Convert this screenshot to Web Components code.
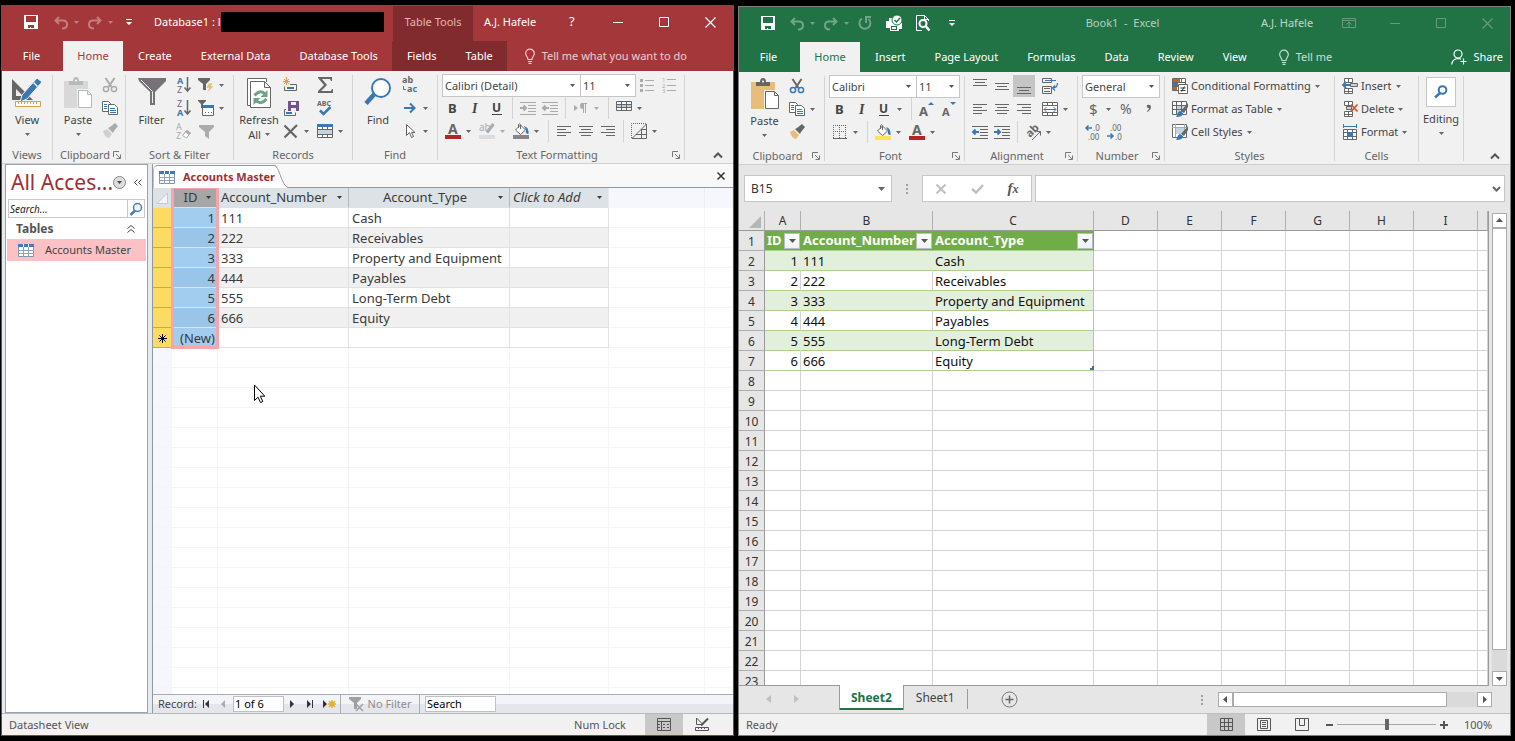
<!DOCTYPE html>
<html lang="en">
<head>
<meta charset="utf-8">
<title>Access and Excel side by side</title>
<style>
  html, body { height: 100%; }
  body {
    margin: 0;
    background: #000;
    font-family: "Noto Sans", "Open Sans", sans-serif;
    font-size: 11px;
    line-height: 16px;
    color: #444;
    overflow: hidden;
  }
  main {
    box-sizing: border-box;
    height: 100%;
    padding: 5px 4px 5px 1px;
    display: grid;
    grid-template-columns: 733fr 773fr;
    gap: 4px;
  }
  office-window.excel { margin-top: 1px; }
  .stack { display: flex; flex-direction: column; }
  .row { display: flex; height: 23px; }
  .gap { width: 4px; }
</style>
</head>
<body>
<main>
  <office-window class="access" style="--brand:#a4373a; --brand-dark:#822b2e; --frame:#a4373a; --back:#f0f0f0; --far:8px">
    <title-bar slot="title" user="A.J. Hafele" help>
      <tool-button slot="quick" icon="save" label="Save"></tool-button>
      <tool-button slot="quick" icon="undo" label="Undo" caret faded class="far"></tool-button>
      <tool-button slot="quick" icon="redo" label="Redo" caret faded></tool-button>
      <tool-button slot="quick" icon="custom" label="Customize Quick Access Toolbar"></tool-button>
      <document-name slot="name">Database1 : l</document-name>
      <span slot="context">Table Tools</span>
    </title-bar>
    <tab-strip slot="tabs" tabs="File,Home,Create,External Data,Database Tools" context="Fields,Table" tell="Tell me what you want to do"></tab-strip>
    <ribbon-bar slot="ribbon">
      <ribbon-group label="Views">
        <big-button icon="view" label="View" caret></big-button>
      </ribbon-group>
      <ribbon-group label="Clipboard" launcher>
        <big-button icon="paste" label="Paste" caret disabled></big-button>
        <div class="stack">
          <tool-button icon="cut" label="Cut" disabled></tool-button>
          <tool-button icon="copy" label="Copy"></tool-button>
          <tool-button icon="painter" label="Format Painter" disabled></tool-button>
        </div>
      </ribbon-group>
      <ribbon-group label="Sort &amp; Filter">
        <big-button icon="filter" label="Filter" style="--big:43px"></big-button>
        <div class="stack">
          <tool-button icon="sortAsc" label="Ascending"></tool-button>
          <tool-button icon="sortDesc" label="Descending"></tool-button>
          <tool-button icon="sortClear" label="Remove Sort" disabled></tool-button>
        </div>
        <div class="stack">
          <tool-button icon="selection" label="Selection" caret></tool-button>
          <tool-button icon="advanced" label="Advanced" caret></tool-button>
          <tool-button icon="funnel" label="Toggle Filter" disabled></tool-button>
        </div>
      </ribbon-group>
      <ribbon-group label="Records">
        <big-button icon="refresh" label="Refresh" second="All" caret></big-button>
        <div class="stack">
          <tool-button icon="newRecord" label="New"></tool-button>
          <tool-button icon="saveRecord" label="Save Record"></tool-button>
          <tool-button icon="deleteX" label="Delete" caret></tool-button>
        </div>
        <div class="stack">
          <tool-button icon="sigma" label="Totals"></tool-button>
          <tool-button icon="spelling" label="Spelling"></tool-button>
          <tool-button icon="moreRows" label="More" caret></tool-button>
        </div>
      </ribbon-group>
      <ribbon-group label="Find">
        <big-button icon="find" label="Find"></big-button>
        <div class="stack">
          <tool-button icon="replace" label="Replace"></tool-button>
          <tool-button icon="goto" label="Go To" caret></tool-button>
          <tool-button icon="select" label="Select" caret></tool-button>
        </div>
      </ribbon-group>
      <ribbon-group label="Text Formatting" launcher>
        <div class="stack">
          <div class="row">
            <combo-box value="Calibri (Detail)" label="Font" style="--w:139px"></combo-box>
            <combo-box value="11" label="Font Size" style="--w:55px"></combo-box>
            <tool-button icon="bullets" label="Bullets" disabled></tool-button>
            <tool-button icon="numbers" label="Numbering" disabled></tool-button>
          </div>
          <div class="row">
            <tool-button icon="bold" label="Bold"></tool-button>
            <tool-button icon="italic" label="Italic"></tool-button>
            <tool-button icon="underline" label="Underline"></tool-button>
            <tool-rule></tool-rule>
            <tool-button icon="indent" label="Increase List Level" disabled></tool-button>
            <tool-button icon="outdent" label="Decrease List Level" disabled></tool-button>
            <tool-rule></tool-rule>
            <tool-button icon="pilcrow" label="Left-to-Right" caret disabled></tool-button>
            <tool-rule></tool-rule>
            <tool-button icon="gridlines" label="Gridlines" caret></tool-button>
          </div>
          <div class="row">
            <tool-button icon="fontColor" label="Font Color" caret></tool-button>
            <tool-button icon="highlight" label="Text Highlight Color" caret disabled></tool-button>
            <tool-button icon="fill" label="Background Color" caret style="--fill:#8a838b"></tool-button>
            <tool-rule></tool-rule>
            <tool-button icon="alignLeft" label="Align Left"></tool-button>
            <tool-button icon="alignCenter" label="Center"></tool-button>
            <tool-button icon="alignRight" label="Align Right"></tool-button>
            <tool-rule></tool-rule>
            <tool-button icon="altRow" label="Alternate Row Color" caret></tool-button>
          </div>
        </div>
      </ribbon-group>
    </ribbon-bar>
    <access-body slot="body"></access-body>
    <status-bar slot="status" text="Datasheet View" lock="Num Lock" views="sheetView,designView"></status-bar>
  </office-window>

  <office-window class="excel" style="--brand:#217346; --brand-dark:#185c37; --frame:#7f7f7f; --back:#e6e6e6; --far:7px; --big:43px">
    <title-bar slot="title" user="A.J. Hafele" centered faded>
      <tool-button slot="quick" icon="save" label="Save"></tool-button>
      <tool-button slot="quick" icon="undo" label="Undo" caret faded class="far"></tool-button>
      <tool-button slot="quick" icon="redo" label="Redo" caret faded></tool-button>
      <tool-button slot="quick" icon="repeat" label="Repeat" faded></tool-button>
      <tool-button slot="quick" icon="print" label="Quick Print" class="far"></tool-button>
      <tool-button slot="quick" icon="preview" label="Print Preview" class="far"></tool-button>
      <tool-button slot="quick" icon="custom" label="Customize Quick Access Toolbar" class="far"></tool-button>
      <span slot="name">Book1&nbsp; -&nbsp; Excel</span>
    </title-bar>
    <tab-strip slot="tabs" tabs="File,Home,Insert,Page Layout,Formulas,Data,Review,View" tell="Tell me" share></tab-strip>
    <ribbon-bar slot="ribbon">
      <ribbon-group label="Clipboard" launcher>
        <big-button icon="paste" label="Paste" caret></big-button>
        <div class="stack">
          <tool-button icon="cut" label="Cut"></tool-button>
          <tool-button icon="copy" label="Copy" caret></tool-button>
          <tool-button icon="painter" label="Format Painter"></tool-button>
        </div>
      </ribbon-group>
      <ribbon-group label="Font" launcher>
        <div class="stack">
          <div class="row">
            <combo-box value="Calibri" label="Font" style="--w:88px"></combo-box>
            <combo-box value="11" label="Font Size" style="--w:43px"></combo-box>
          </div>
          <div class="row">
            <tool-button icon="bold" label="Bold"></tool-button>
            <tool-button icon="italic" label="Italic"></tool-button>
            <tool-button icon="underline" label="Underline" caret></tool-button>
            <tool-rule></tool-rule>
            <tool-button icon="grow" label="Increase Font Size"></tool-button>
            <tool-button icon="shrink" label="Decrease Font Size"></tool-button>
          </div>
          <div class="row">
            <tool-button icon="borders" label="Borders" caret></tool-button>
            <tool-rule></tool-rule>
            <tool-button icon="fill" label="Fill Color" caret style="--fill:#ffe35c"></tool-button>
            <tool-button icon="fontColor" label="Font Color" caret></tool-button>
          </div>
        </div>
      </ribbon-group>
      <ribbon-group label="Alignment" launcher>
        <div class="stack">
          <div class="row">
            <tool-button icon="top" label="Top Align"></tool-button>
            <tool-button icon="middle" label="Middle Align"></tool-button>
            <tool-button icon="bottom" label="Bottom Align" pressed></tool-button>
            <span class="gap"></span>
            <tool-button icon="wrap" label="Wrap Text"></tool-button>
          </div>
          <div class="row">
            <tool-button icon="alignLeft" label="Align Left"></tool-button>
            <tool-button icon="alignCenter" label="Center"></tool-button>
            <tool-button icon="alignRight" label="Align Right"></tool-button>
            <span class="gap"></span>
            <tool-button icon="merge" label="Merge and Center" caret></tool-button>
          </div>
          <div class="row">
            <tool-button icon="outdent" label="Decrease Indent"></tool-button>
            <tool-button icon="indent" label="Increase Indent"></tool-button>
            <tool-rule></tool-rule>
            <tool-button icon="orient" label="Orientation" caret></tool-button>
          </div>
        </div>
      </ribbon-group>
      <ribbon-group label="Number" launcher>
        <div class="stack">
          <div class="row"><combo-box value="General" label="Number Format" style="--w:78px"></combo-box></div>
          <div class="row">
            <tool-button icon="dollar" label="Accounting Number Format" caret></tool-button>
            <tool-button icon="percent" label="Percent Style"></tool-button>
            <tool-button icon="comma" label="Comma Style"></tool-button>
          </div>
          <div class="row">
            <tool-button icon="moreDec" label="Increase Decimal"></tool-button>
            <tool-button icon="lessDec" label="Decrease Decimal"></tool-button>
          </div>
        </div>
      </ribbon-group>
      <ribbon-group label="Styles" style="--group:170px">
        <div class="stack">
          <tool-button icon="condFormat" text="Conditional Formatting" caret></tool-button>
          <tool-button icon="formatTable" text="Format as Table" caret></tool-button>
          <tool-button icon="cellStyles" text="Cell Styles" caret></tool-button>
        </div>
      </ribbon-group>
      <ribbon-group label="Cells" style="--group:84px">
        <div class="stack">
          <tool-button icon="insertCells" text="Insert" caret></tool-button>
          <tool-button icon="deleteCells" text="Delete" caret></tool-button>
          <tool-button icon="formatCells" text="Format" caret></tool-button>
        </div>
      </ribbon-group>
      <ribbon-group>
        <big-button icon="editing" label="Editing" caret boxed></big-button>
      </ribbon-group>
    </ribbon-bar>
    <excel-body slot="body"></excel-body>
    <status-bar slot="status" text="Ready" views="normalView,pageView,breakView" zoom="100%"></status-bar>
  </office-window>
</main>

<script>
const INK = 'var(--ink, #666)';
const BLUE = 'var(--blue, #3a78b5)';
const TAN = 'var(--tan, #e8bd7c)';

const lines = (list, color = INK) =>
  `<path fill="${color}" d="${list.map(([x, y, w]) => `M${x} ${y}h${w}v1h${-w}z`).join('')}"/>`;

const letter = (x, y, size, text, extra = '') =>
  `<text x="${x}" y="${y}" font-size="${size}" font-family="Noto Sans" fill="${INK}" ${extra}>${text}</text>`;

const brush = `<path fill="${INK}" d="M16 2v4l-4 6-3-2z"/><path fill="${BLUE}" d="M8 10l3 2c0 3-3 4-7 4 2-2 1-5 4-6z"/>`;
const bucket = `<path fill="#fff" stroke="${INK}" d="M2.5 7l5-5 5 5-5 4.500z"/><path fill="none" stroke="${INK}" d="M5.500 5V1.500q1.500-1.500 2 0V6"/><path fill="${BLUE}" d="M11 3q5 1 4.500 8Q12 11 13 7z"/><path fill="var(--fill)" d="M0 12h16v4H0z"/>`;
const tableIcon = '<path fill="#fff" stroke="#7d95ad" d="M.5 1.500h15v12H.5z"/><path fill="#3d7bbf" d="M0 1h16v3H0z"/><path stroke="#8ba3bb" d="M0 7.500h16M0 10.500h16M5.500 4v10M10.500 4v10"/><path stroke="#fff" d="M5.500 1v3M10.500 1v3"/>';

// name: [width, height, markup]
const ICONS = {
  save: [14, 14, '<path fill="#fff" fill-rule="evenodd" d="M0 0h14v14H0zM2 1v6h10V1zM4 10v3h2v-1h1v1h3v-3z"/>'],
  undo: [14, 13, '<path fill="none" stroke="#fff" stroke-width="2" d="M5 1L1.500 4.500 5 8M2 4.500h7q4 0 4 4t-5 4"/>'],
  redo: [14, 13, '<path fill="none" stroke="#fff" stroke-width="2" d="M9 1l3.500 3.500L9 8M12 4.500H5q-4 0-4 4t5 4"/>'],
  repeat: [14, 14, '<path fill="none" stroke="#fff" stroke-width="2" d="M4 2.500A5.500 5.500 0 1 0 10.500 3"/><path fill="none" stroke="#fff" stroke-width="2" d="M8 7V1h5"/>'],
  print: [16, 16, '<path fill="#fff" d="M0 6h3V3h5v5h8v6h-3v2H4v-3H0z"/><path fill="var(--brand)" d="M5 11h6v4H5z"/><path fill="#fff" d="M6 12h4v2H6z"/><circle cx="11" cy="5" r="5" fill="#fff" stroke="var(--brand)"/><path fill="none" stroke="var(--brand)" stroke-width="1.500" d="M8.500 5l2 2 3.500-4"/>'],
  preview: [14, 16, '<path fill="none" stroke="#fff" d="M12.500 6V4.500L8.500.5h-8v15H6M8.500.5v4h4"/><circle cx="7" cy="8.500" r="3.500" fill="none" stroke="#fff" stroke-width="2"/><path stroke="#fff" stroke-width="2.500" d="M9.500 11l4 4.500"/>'],
  custom: [6, 6, '<path fill="#fff" d="M0 0h6v1H0zM0 3h6L3 6z"/>'],
  display: [14, 10, '<path fill="none" stroke="#fff" d="M.5.500h13v9H.5zM0 2.500h14M7 9V4M4.500 6.500L7 4l2.500 2.500"/>'],
  min: [10, 10, '<path stroke="#fff" d="M0 5.500h10"/>'],
  max: [10, 10, '<path fill="none" stroke="#fff" d="M.5.500h9v9h-9z"/>'],
  close: [11, 11, '<path stroke="#fff" stroke-width="1.200" d="M.5.500l10 10M10.500.500l-10 10"/>'],
  help: [8, 12, '<text x="1" y="10" font-size="13" font-family="Noto Sans" fill="#fff">?</text>'],
  bulb: [10, 15, '<path fill="none" stroke="#fff" stroke-width="1.200" d="M3 10.500C3 8 .7 7 .7 4.500a4.300 4.300 0 0 1 8.600 0C9.300 7 7 8 7 10.500zM3 12.500h4M3.500 14.400h3"/>'],
  person: [16, 16, '<g fill="none" stroke="#fff" stroke-width="1.200"><circle cx="7" cy="5" r="4"/><path d="M.7 15.500Q1.500 9.700 7 9.500q2 0 3 .8M12.500 9.500v6M9.500 12.500h6"/></g>'],

  view: [32, 32, `<path fill="${INK}" fill-rule="evenodd" d="M1 2v21h21zM5 12v7h7z"/><path fill="${BLUE}" stroke="#f1f1f1" d="M26 1l5 4-15 17-7 3 2-7z"/><path fill="#f1f1f1" d="M23 5l4 4-1 1-4-4z"/><path fill="#fff" stroke="#dba04f" d="M4.500 24.500h25v5h-25z"/><path stroke="#dba04f" d="M7.500 25v2M10.500 25v2M13.500 25v2M16.500 25v2M19.500 25v2M22.500 25v2M25.500 25v2"/>`],
  paste: [30, 32, `<path fill="${TAN}" d="M1 4h24v27H1z"/><path fill="${INK}" d="M6 8V4h4q0-4 3-4t3 4h4v4z"/><circle cx="13" cy="3.500" r="1" fill="#fff"/><path fill="#f1f1f1" d="M14 12h16v20H14z"/><path fill="#fff" stroke="${INK}" d="M15.500 13.500h9l4 4v13h-13zM24.500 13.500v4h4"/>`],
  filter: [28, 30, '<path fill="#767278" d="M0 1h28v3L17 15v13h-5V15L1 4z"/><path fill="none" stroke="#f1f1f1" d="M3 3l11.500 11.500V26"/>'],
  refresh: [26, 32, `<path fill="#fff" stroke="${INK}" d="M20.500 5V1.500H1.500v27h3"/><path fill="#fff" stroke="${INK}" d="M4.500 4.500h14l6 6v20h-20zM18.500 4.500v6h6"/><g fill="none" stroke="#6fa287" stroke-width="3"><path d="M8.500 18.500q6-7 11-1M20.500 22q-6 7-11 1"/></g><path fill="#6fa287" d="M21.500 13v7h-7zM7.500 28v-7h7z"/>`],
  find: [28, 30, `<circle cx="17" cy="11" r="9" fill="#fff" stroke="${BLUE}" stroke-width="2"/><path stroke="${BLUE}" stroke-width="4.500" d="M10.500 17L2 26.500"/>`],
  editing: [14, 14, `<circle cx="8.500" cy="5" r="3.800" fill="none" stroke="${BLUE}" stroke-width="2"/><path stroke="${BLUE}" stroke-width="2.500" d="M6 8l-5 4.500"/>`],

  cut: [16, 16, `<path stroke="${INK}" stroke-width="2" d="M3.500 1l6 9M12.500 1l-6 9"/><g fill="none" stroke="${BLUE}" stroke-width="1.500"><circle cx="4" cy="12" r="2.600"/><circle cx="12" cy="12" r="2.600"/></g>`],
  copy: [16, 16, `<path fill="#fff" stroke="${INK}" d="M.5 1.500h6l2 2v8h-8z"/><path fill="#fff" stroke="${INK}" d="M6.500 4.500h6l3 3v7h-9z"/><path stroke="${BLUE}" d="M2 4.500h3M2 6.500h3M2 8.500h3M8 8.500h5M8 10.500h6M8 12.500h6"/>`],
  painter: [16, 16, `<path fill="${TAN}" d="M1 8l4-2 5 5-3 4q-4 0-6-7z"/><path fill="${INK}" d="M6 5l2-1 5-4 3 3-4 5-1 2z"/>`],
  sortAsc: [16, 16, letter(1, 7, 9, 'A', 'style="fill:#3a78b5" font-weight="bold"') + letter(1, 16, 9, 'Z', 'style="fill:#805b85"') + `<path fill="none" stroke="${INK}" stroke-width="1.500" d="M11.500 0v14M8.500 10.500l3 3.500 3-3.500"/>`],
  sortDesc: [16, 16, letter(1, 7, 9, 'Z', 'style="fill:#805b85"') + letter(1, 16, 9, 'A', 'style="fill:#3a78b5" font-weight="bold"') + `<path fill="none" stroke="${INK}" stroke-width="1.500" d="M11.500 0v14M8.500 10.500l3 3.500 3-3.500"/>`],
  sortClear: [16, 16, letter(0, 7, 9, 'A') + letter(0, 16, 9, 'Z') + `<path fill="#fff" stroke="${INK}" d="M6.500 12.500l4-5 4 2.500-4 5z"/><path fill="${INK}" d="M9 9l2-2 4 3-2 2z"/>`],
  selection: [16, 16, `<path fill="${INK}" d="M0 1h12v2L8 7v6H5V7L0 3z"/><path fill="${TAN}" stroke="#f1f1f1" stroke-width=".5" d="M11 6h4l-2 3h3l-7 7 2-5H8z"/>`],
  advanced: [16, 16, `<path fill="#fff" stroke="${INK}" d="M4.500 5.500h11v10h-11z"/><path fill="${BLUE}" d="M5 5h11v3H5z"/><path fill="${INK}" d="M0 0h8v1L5 4v4H3V4L0 1zM7 12h1v1H7zM10 12h1v1h-1zM13 12h1v1h-1z"/>`],
  funnel: [15, 15, `<path fill="${INK}" d="M0 1h15v2l-5 5v7l-4-3V8L0 3z"/>`],
  newRecord: [16, 16, `<path fill="none" stroke="${INK}" d="M7 7.500h6.500v6h-12v-4"/><path fill="${BLUE}" d="M4 10h7v2H4z"/><path stroke="#dba04f" d="M3.500 0v8M0 4.500h7M1 2l5 5M6 2L1 7"/>`],
  saveRecord: [16, 16, `<path fill="none" stroke="${INK}" d="M3 9.500H1.500v6h11v-3"/><path fill="${BLUE}" d="M3 12h6v2H3z"/><path fill="#72538a" fill-rule="evenodd" d="M5 1h11v10H5zM8 2v3h5V2zM8 8v3h5V8z"/>`],
  deleteX: [16, 16, `<path stroke="${INK}" stroke-width="2.200" d="M1.500 2.500l12 12M14 2L1.500 14.500"/>`],
  sigma: [16, 16, `<path fill="${INK}" d="M1 0h14v4h-1l-1-2H5l5 6-6 6h10l1-2h1v4H1v-2l6-6-6-7z"/>`],
  spelling: [16, 16, letter(0, 6, 7, 'ABC', 'font-weight="bold"') + `<path fill="none" stroke="${BLUE}" stroke-width="2.500" d="M3 10.500l3.500 3.500 7-7"/>`],
  moreRows: [16, 16, `<path fill="#fff" stroke="${INK}" d="M.5 1.500h15v13H.5z"/><path fill="${BLUE}" d="M0 1h16v3H0z"/><path fill="#c5d3e2" d="M1 7h14v4H1z"/><path stroke="${INK}" d="M0 6.500h16M0 11.500h16M5.500 4v3M10.500 4v3M5.500 12v3M10.500 12v3"/>`],
  replace: [16, 16, letter(0, 6, 9, 'ab', 'font-weight="bold"') + letter(5, 15, 9, 'a<tspan style="fill:#3a78b5">c</tspan>', 'font-weight="bold"') + `<path fill="none" stroke="${BLUE}" d="M1.500 9v3.500H4"/>`],
  goto: [14, 12, `<path fill="none" stroke="${BLUE}" stroke-width="2" d="M1 6h10M7 1.500L11.500 6 7 10.500"/>`],
  select: [12, 16, `<path fill="#fff" stroke="${INK}" d="M2.500 1.500v11l3-3 2 5 2-1-2-4h3.500z"/>`],
  bullets: [14, 15, lines([[5, 2, 9], [5, 7, 9], [5, 12, 9]]) + `<path fill="${INK}" d="M0 1h3v3H0zM0 6h3v3H0zM0 11h3v3H0z"/>`],
  numbers: [14, 16, lines([[5, 2, 9], [5, 8, 9], [5, 13, 9]]) + letter(0, 5, 6, '1') + letter(0, 11, 6, '2') + letter(0, 16, 6, '3')],
  bold: [10, 14, letter(0, 12, 13, 'B', 'font-weight="bold" style="fill:#444"')],
  italic: [8, 14, '<text x="1" y="12" font-size="14" font-family="Liberation Serif" font-style="italic" font-weight="bold" fill="#444">I</text>'],
  underline: [10, 14, letter(0, 11, 12, 'U', 'font-weight="bold" style="fill:#444"') + '<path fill="#444" d="M0 13h10v1H0z"/>'],
  indent: [16, 14, lines([[0, 1, 16], [8, 4, 8], [8, 7, 8], [8, 10, 8], [0, 13, 16]]) + `<path fill="none" stroke="${BLUE}" stroke-width="2" d="M0 7h6M3.500 4.500L6 7 3.500 9.500"/>`],
  outdent: [16, 14, lines([[0, 1, 16], [8, 4, 8], [8, 7, 8], [8, 10, 8], [0, 13, 16]]) + `<path fill="none" stroke="${BLUE}" stroke-width="2" d="M7 7H1M3.500 4.500L1 7l2.500 2.500"/>`],
  pilcrow: [14, 12, `<path fill="${INK}" d="M0 3l4 3-4 3zM8 1h5v1h-1v9h-1V2h-1v9H9V7Q6 7 6 4t2-3z"/>`],
  gridlines: [16, 14, `<path fill="#fff" stroke="${INK}" d="M.5.500h15v9H.5z"/><path fill="#b9d0e4" d="M1 4h14v2H1z"/><path stroke="${INK}" d="M0 3.500h16M0 6.500h16M5.500 0v10M10.500 0v10"/>`],
  fontColor: [16, 16, letter(3, 11, 14, 'A', 'font-weight="bold"') + '<path fill="#b3281e" d="M0 12h16v4H0z"/>'],
  highlight: [16, 16, letter(0, 8, 10, 'ab') + `<path stroke="${INK}" stroke-width="3" d="M14.500 1L8 9.500"/><path fill="#dcdcdc" d="M0 12h16v4H0z"/>`],
  fill: [16, 16, bucket],
  alignLeft: [14, 13, lines([[0, 1, 14], [0, 4, 9], [0, 7, 14], [0, 10, 9]])],
  alignCenter: [14, 13, lines([[0, 1, 14], [2, 4, 10], [0, 7, 14], [2, 10, 10]])],
  alignRight: [14, 13, lines([[0, 1, 14], [5, 4, 9], [0, 7, 14], [5, 10, 9]])],
  altRow: [16, 16, `<path fill="none" stroke="${INK}" stroke-dasharray="1 1" d="M.5 15V.5H15"/><path fill="none" stroke="${INK}" d="M1 15.500h14.500V1zM15 6.500h-5M15 11.500H5M10.500 7v8"/>`],
  top: [14, 16, lines([[0, 1, 14], [2, 4, 10], [0, 7, 14]])],
  middle: [14, 16, lines([[0, 5, 14], [2, 8, 10], [0, 11, 14]])],
  bottom: [14, 16, lines([[0, 9, 14], [2, 12, 10], [0, 15, 14]])],
  wrap: [16, 16, `<path fill="none" stroke="${INK}" d="M.5.500h9v4h-9zM.5 8.500h9v7h-9zM2 10.500h6M2 13.500h6"/><path fill="none" stroke="${BLUE}" stroke-width="1.200" d="M3 2.500h11M15.500 5q0 5-5 5M13 7.500L10.500 10l2.500 2.500"/>`],
  merge: [16, 16, `<path fill="#fff" stroke="${INK}" d="M.5 1.500h15v13H.5zM0 4.500h16M0 11.500h16M5.500 1v3M10.500 1v3M5.500 12v3M10.500 12v3"/><path fill="none" stroke="${BLUE}" d="M2 8.500h12M4.500 6l-2.500 2.500 2.500 2.500M11.500 6l2.500 2.500-2.500 2.500"/>`],
  orient: [16, 16, letter(0, 0, 11, 'ab', 'font-weight="bold" transform="translate(5 14) rotate(-45)"') + `<path fill="none" stroke="${INK}" d="M7 16l8.500-8.500M11.500 7.500h4v4"/>`],
  grow: [16, 16, letter(0, 15, 13, 'A', 'font-weight="bold"') + `<path fill="${BLUE}" d="M9 4l3-3 3 3z"/>`],
  shrink: [16, 16, letter(1, 15, 11, 'A', 'font-weight="bold"') + `<path fill="${BLUE}" d="M9 1h6l-3 3z"/>`],
  borders: [14, 14, `<path fill="none" stroke="${INK}" stroke-dasharray="1 1" d="M.5 0v13M6.500 0v13M12.500 0v13M0 .5h13M0 6.500h13"/><path fill="${INK}" d="M0 13h14v1H0z"/>`],
  dollar: [10, 16, letter(1, 14, 15, '$')],
  percent: [14, 16, letter(0, 13, 14, '%')],
  comma: [6, 16, `<path fill="${INK}" d="M1 4q4-1 4 2t-4 5v-1q2-1 2-3Q0 7 1 4z"/>`],
  moreDec: [16, 16, letter(8, 7, 8, '.0') + letter(3, 16, 8, '.00') + `<path fill="none" stroke="${BLUE}" stroke-width="1.500" d="M7 4H1M3.500 1.500L1 4l2.500 2.500"/>`],
  lessDec: [16, 16, letter(3, 7, 8, '.00') + letter(8, 16, 8, '.0') + `<path fill="none" stroke="${BLUE}" stroke-width="1.500" d="M0 12h6M3.500 9.500L6 12l-2.500 2.500"/>`],
  condFormat: [16, 16, `<path fill="#fff" stroke="${INK}" d="M.5.500h13v12H.5z"/><path fill="#c0622d" d="M1 1h7v3H1zM1 9h4v3H1z"/><path fill="${BLUE}" d="M1 5h5v3H1z"/><path stroke="${INK}" d="M0 4.500h14M0 8.500h7M9.500 0v5"/><path fill="#fff" stroke="${INK}" d="M6.500 6.500h9v9h-9z"/><path stroke="#333" d="M8.500 10h5M8.500 12.500h5M12.500 8.500l-3 5"/>`],
  formatTable: [16, 16, `<path fill="#fff" stroke="${INK}" d="M.5.500h14v13H.5z"/><path fill="#c5d3e2" d="M5 5h10v4H5zM5 9h5v4H5z"/><path stroke="${INK}" d="M0 4.500h15M0 8.500h15M4.500 0v13M9.500 0v13"/>${brush}`],
  cellStyles: [16, 16, `<path fill="#fff" stroke="${INK}" d="M.5.500h14v13H.5z"/><path fill="#c5d3e2" d="M4 4h8v6H4z"/><path stroke="#9db3a5" d="M0 3.500h15M3.500 0v13M12.500 0v8"/>${brush}`],
  insertCells: [16, 16, `<path fill="#fff" stroke="${INK}" d="M2.500.500h8v4h-8zM2.500 10.500h8v5h-8zM6.500 0v4M6.500 11v4M2 13.500h9"/><path fill="#c5d3e2" stroke="${INK}" d="M8.500 5.500h7v3h-7z"/><path fill="none" stroke="${BLUE}" stroke-width="1.800" d="M8 7H1M4 4L1 7l3 3"/>`],
  deleteCells: [16, 16, `<path fill="#fff" stroke="${INK}" d="M2.500.500h8v4h-8zM2.500 10.500h8v5h-8zM6.500 0v4M6.500 11v4M2 13.500h9"/><path fill="#c5d3e2" stroke="${INK}" d="M4.500 5.500h5v3h-5z"/><path stroke="#d0562f" stroke-width="1.800" d="M9 3.500l6.500 7M15.500 3.500l-6.500 7"/>`],
  formatCells: [16, 16, `<path fill="#fff" stroke="${INK}" d="M1.500 5.500h13v10h-13zM1 8.500h14M1 12.500h14M5.500 5v11M10.500 5v11"/><path fill="${BLUE}" d="M5 8h6v5H5z"/><path fill="none" stroke="${BLUE}" d="M1.500 0v4M14.500 0v4M2 2.500h12"/>`],
  launcher: [8, 8, '<path fill="none" stroke="#777" d="M.5 6V.5H6M3 3l4 4M7.500 3.500v4h-4"/>'],
  collapse: [10, 6, '<path fill="none" stroke="#555" stroke-width="2" d="M1 5.500l4-4 4 4"/>'],
  table: [16, 15, tableIcon],
  search: [14, 14, '<circle cx="8.500" cy="5.500" r="4" fill="#eef5fb" stroke="#4a7fb5" stroke-width="1.500"/><path stroke="#4a7fb5" stroke-width="2.500" d="M6 8.500l-4.500 4.500"/>'],
  noFilter: [16, 16, '<path fill="#a0a0a0" d="M0 1h12v2L8 7v6H5V7L0 3z"/><path stroke="#a0a0a0" stroke-width="1.500" d="M7 8l7 7M14 8l-7 7"/>'],
  sheetView: [14, 13, '<path fill="none" stroke="#555" d="M.5.500h13v12H.5zM0 3.500h14M4.500 3v10M6 6.500h2M10 6.500h2M6 9.500h2M10 9.500h2M1 6.500h2M1 9.500h2"/>'],
  designView: [14, 13, '<path fill="none" stroke="#555" d="M1.500 0v6.500H8zM.5 9.500h13v3H.5zM3.500 10v1M6.500 10v1M9.500 10v1"/><path stroke="#555" stroke-width="2" d="M13 .5L6 7.500"/>'],
  normalView: [13, 13, '<path fill="none" stroke="#555" d="M.5.500h12v12H.5zM0 4.500h13M0 8.500h13M4.500 0v13M8.500 0v13"/>'],
  pageView: [14, 13, '<path fill="none" stroke="#555" d="M.5.500h13v12H.5zM3.500 2.500h7v8h-7zM5 4.500h4M5 6.500h4M5 8.500h4"/>'],
  breakView: [14, 13, '<path fill="none" stroke="#555" d="M.5.500h13v12H.5zM4.500 0v7.500h5M9.500 0v7.500"/>']
};

function icon(name) {
  const [w, h, body] = ICONS[name];
  return `<svg width="${w}" height="${h}" viewBox="0 0 ${w} ${h}" aria-hidden="true">${body}</svg>`;
}

const CARET = '<svg class="caret" width="5" height="3" viewBox="0 0 5 3" aria-hidden="true"><path fill="currentColor" d="M0 0h5L2.500 3z"/></svg>';

// shared by every shadow root
const RESET = `
  *, *::before { box-sizing: border-box; }
  svg { display: block; flex: none; overflow: visible; }
  button, input, select { margin: 0; padding: 0; border: 0; border-radius: 0; background: none; font: inherit; color: inherit; outline: 0; }
  button { display: flex; align-items: center; justify-content: center; }
`;

class Part extends HTMLElement {
  constructor() {
    super();
    this.attachShadow({ mode: 'open' });
  }
  connectedCallback() {
    this.shadowRoot.innerHTML = `<style>${RESET}${this.css()}</style>${this.html()}`;
  }
  attr(name) {
    return this.getAttribute(name) || '';
  }
  list(name) {
    return this.attr(name).split(',').filter(Boolean);
  }
}

class OfficeWindow extends Part {
  css() {
    return `
      :host {
        display: grid;
        grid-template-rows: 35px 30px 93px minmax(0, 1fr) 21px;
        grid-template-columns: minmax(0, 1fr);
        min-width: 0;
        border: 1px solid var(--frame);
        background: var(--back);
        overflow: hidden;
        box-sizing: border-box;
      }
    `;
  }
  html() {
    return ['title', 'tabs', 'ribbon', 'body', 'status'].map(s => `<slot name="${s}"></slot>`).join('');
  }
}

class TitleBar extends Part {
  css() {
    const faded = this.hasAttribute('faded');
    return `
      :host { display: flex; background: var(--brand); color: #fff; }
      .quick { display: flex; align-items: center; height: 32px; padding-left: 18px; }
      ::slotted(.far) { margin-left: var(--far); }
      .name { flex: 1; min-width: 0; display: flex; align-items: center; height: 32px; padding-left: 14px; ${this.hasAttribute('centered') ? 'justify-content: center; padding-left: 32px; opacity: .65;' : ''} }
      .context { width: 80px; background: var(--brand-dark); color: #e8b4b0; text-align: center; line-height: 32px; }
      .user { width: 76px; padding-left: 11px; line-height: 32px; white-space: nowrap; ${faded ? 'opacity: .7;' : ''} }
      .box { display: flex; height: 32px; }
      .box button { width: 46px; height: 32px; ${faded ? 'opacity: .3;' : ''} }
    `;
  }
  html() {
    const first = this.hasAttribute('help') ? ['help', 'Help'] : ['display', 'Ribbon Display Options'];
    const context = this.querySelector('[slot=context]') ? '<div class="context"><slot name="context"></slot></div>' : '';
    return `
      <div class="quick"><slot name="quick"></slot></div>
      <div class="name"><slot name="name"></slot></div>
      ${context}
      <div class="user">${this.attr('user')}</div>
      <div class="box">
        ${[first, ['min', 'Minimize'], ['max', 'Maximize'], ['close', 'Close']]
          .map(([name, label]) => `<button aria-label="${label}">${icon(name)}</button>`).join('')}
      </div>
    `;
  }
}

// file name with the path blacked out
class DocumentName extends Part {
  css() {
    return `
      :host { flex: 1; display: flex; align-items: center; min-width: 0; }
      .mask { flex: 1; height: 20px; margin-right: 9px; background: #000; }
    `;
  }
  html() {
    return '<span><slot></slot></span><span class="mask"></span>';
  }
}

class TabStrip extends Part {
  css() {
    return `
      :host { display: flex; background: var(--brand); color: #fff; white-space: nowrap; }
      button { height: 30px; padding: 0 14px 0 15px; }
      .file { width: 61px; padding: 0 2px 0 0; }
      .home { width: 60px; padding: 0; background: #f1f1f1; color: var(--brand); }
      .context { display: flex; background: var(--brand-dark); }
      .tell { gap: 7px; padding-left: 18px; opacity: .75; }
      .share { margin-left: auto; gap: 6px; padding: 0 7px; }
    `;
  }
  html() {
    const tab = t => `<button class="${t.toLowerCase()}">${t}</button>`;
    const context = this.list('context');
    return `
      ${this.list('tabs').map(tab).join('')}
      ${context.length ? `<div class="context">${context.map(tab).join('')}</div>` : ''}
      <button class="tell">${icon('bulb')}${this.attr('tell')}</button>
      ${this.hasAttribute('share') ? `<button class="share">${icon('person')}Share</button>` : ''}
    `;
  }
}

class RibbonBar extends Part {
  css() {
    return `
      :host { display: flex; padding-top: 3px; background: #f1f1f1; border-bottom: 1px solid #d0d0d0; box-sizing: border-box; }
      .collapse { margin: auto 9px 3px auto; width: 12px; height: 10px; }
    `;
  }
  html() {
    return `<slot></slot><button class="collapse" aria-label="Collapse the Ribbon">${icon('collapse')}</button>`;
  }
}

class RibbonGroup extends Part {
  css() {
    return `
      :host {
        display: flex;
        flex-direction: column;
        flex: none;
        min-width: var(--group, 0);
        padding: 0 5px 0 4px;
        background: linear-gradient(#d4d4d4, #d4d4d4) right 1px / 1px 85px no-repeat;
        box-sizing: border-box;
      }
      .tools { display: flex; height: 69px; margin-bottom: 4px; }
      .foot { display: flex; align-items: center; height: 16px; color: #666; white-space: nowrap; }
      .foot span { flex: 1; text-align: center; }
    `;
  }
  html() {
    const launcher = this.hasAttribute('launcher')
      ? `<button aria-label="${this.attr('label')} settings">${icon('launcher')}</button>` : '';
    return `
      <div class="tools"><slot></slot></div>
      <div class="foot"><span>${this.attr('label')}</span>${launcher}</div>
    `;
  }
}

class ToolButton extends Part {
  css() {
    return `
      :host { display: flex; height: 23px; color: #444; }
      :host([slot=quick]) { color: #fff; height: 22px; }
      :host([disabled]) { --ink: #ababab; --blue: #ababab; --tan: #cfcfcf; }
      :host([faded]) { opacity: .35; }
      button { height: 22px; white-space: nowrap; }
      :host([pressed]) button { background: #c5c5c5; }
      .icon { width: 22px; height: 22px; display: flex; align-items: center; justify-content: center; }
      .drop { width: 12px; display: flex; padding-left: 2px; color: #666; }
      :host([text]) .drop { padding-left: 4px; }
      :host([slot=quick]) .drop { color: #fff; }
      :host([disabled]) .drop { color: #ababab; }
    `;
  }
  html() {
    const text = this.attr('text');
    return `
      <button ${text ? '' : `aria-label="${this.attr('label')}"`} ${this.hasAttribute('disabled') ? 'disabled' : ''}>
        <span class="icon">${icon(this.attr('icon'))}</span>${text}
        ${this.hasAttribute('caret') ? `<span class="drop">${CARET}</span>` : ''}
      </button>
    `;
  }
}

class BigButton extends Part {
  css() {
    return `
      :host { display: block; }
      :host([disabled]) { --ink: #b5bbbb; --tan: #d8d8d8; }
      button { flex-direction: column; justify-content: flex-start; min-width: var(--big, 42px); padding: 3px 1px 0; line-height: 15px; color: #444; }
      .icon { height: 32px; margin-bottom: 3px; display: flex; align-items: flex-start; }
      .second { display: flex; align-items: center; gap: 4px; height: 15px; color: #444; }
      .second svg { color: #666; }
      :host([boxed]) .icon { width: 30px; height: 30px; margin-bottom: 4px; align-items: center; justify-content: center; background: #fff; border: 1px solid #c6c6c6; }
      :host([boxed]) button { padding: 2px 0 0; min-width: 36px; }
    `;
  }
  html() {
    const caret = this.hasAttribute('caret') ? CARET : '';
    return `
      <button>
        <span class="icon">${icon(this.attr('icon'))}</span>
        <span>${this.attr('label')}</span>
        <span class="second">${this.attr('second')}${caret}</span>
      </button>
    `;
  }
}

class ToolRule extends Part {
  css() {
    return ':host { width: 1px; height: 22px; margin: 0 4px; background: #d4d4d4; }';
  }
  html() {
    return '';
  }
}

class ComboBox extends Part {
  css() {
    return `
      :host { display: grid; grid-template-columns: minmax(0, 1fr) 10px; align-items: center; width: var(--w); height: 23px; background: #fff; border: 1px solid #c6c6c6; box-sizing: border-box; }
      :host(:not(:first-child)) { border-left: 0; }
      select { grid-area: 1 / 1 / 2 / 3; width: 100%; height: 21px; padding-left: 2px; appearance: none; }
      .caret { grid-area: 1 / 2; pointer-events: none; color: #555; }
    `;
  }
  html() {
    return `<select aria-label="${this.attr('label')}"><option>${this.attr('value')}</option></select>${CARET}`;
  }
}

class AccessBody extends Part {
  css() {
    return `
      :host { display: grid; grid-template-columns: 150px minmax(0, 1fr); grid-template-rows: minmax(0, 1fr); min-height: 0; border-bottom: 1px solid #b4b8bd; background: #e8ebee; }
      section { display: grid; grid-template-rows: 24px minmax(0, 1fr) 19px; min-height: 0; border-left: 1px solid #8f98a3; }
    `;
  }
  html() {
    return `
      <nav-pane></nav-pane>
      <section>
        <document-tab>Accounts Master</document-tab>
        <data-sheet></data-sheet>
        <record-bar></record-bar>
      </section>
    `;
  }
}

class NavPane extends Part {
  css() {
    return `
      :host { display: block; margin: 0 4px 0 3px; padding: 1px; background: #fff; border: 1px solid #9aa4af; }
      header { display: flex; align-items: center; height: 33px; padding: 0 1px 0 4px; color: #9e3034; }
      h1 { flex: 1; min-width: 0; margin: 0; font-size: 21px; line-height: 33px; font-weight: normal; white-space: nowrap; }
      .round { width: 13px; height: 13px; margin-right: 5px; border: 1px solid #888; border-radius: 50%; background: #ddd; color: #444; }
      .fold { width: 14px; height: 20px; color: #444; }
      form { display: flex; height: 19px; margin: 0 1px; border: 1px solid #c8c8c8; }
      input { flex: 1; min-width: 0; padding-left: 1px; color: #222; font-size: 10px; font-style: italic; }
      input::placeholder { color: #222; opacity: 1; }
      form button { width: 17px; border-left: 1px solid #c8c8c8; }
      h2 { display: flex; justify-content: space-between; align-items: center; margin: 0; padding: 0 11px 0 9px; height: 21px; font-size: 12px; color: #555; }
      a { display: flex; align-items: center; gap: 11px; height: 22px; padding-left: 11px; background: #fbc1c4; color: #444; text-decoration: none; white-space: nowrap; }
    `;
  }
  html() {
    return `
      <header>
        <h1>All Acces...</h1>
        <button class="round" aria-label="Choose category">${CARET}</button>
        <button class="fold" aria-label="Close pane"><svg width="8" height="7" viewBox="0 0 8 7"><path fill="none" stroke="currentColor" d="M3.500.500l-3 3 3 3M7.500.500l-3 3 3 3"/></svg></button>
      </header>
      <form>
        <input aria-label="Search objects" placeholder="Search...">
        <button type="button" aria-label="Search">${icon('search')}</button>
      </form>
      <h2>Tables <svg width="8" height="8" viewBox="0 0 8 8"><path fill="none" stroke="#444" d="M.5 3.500l3.500-3 3.500 3M.5 7.500l3.500-3 3.500 3"/></svg></h2>
      <a href="#accounts">${icon('table')}Accounts Master</a>
    `;
  }
}

class DocumentTab extends Part {
  css() {
    return `
      :host { display: flex; background: linear-gradient(#8f98a3, #8f98a3) bottom / 100% 1px no-repeat #f8f8f8; }
      .label { display: flex; align-items: center; gap: 8px; height: 23px; margin-top: 1px; padding: 0 0 0 5px; border-top: 1px solid #8f98a3; border-left: 1px solid #f0b49c; border-top-left-radius: 5px; background: #fff; color: #9e3034; font-weight: bold; white-space: nowrap; }
      .edge { margin-top: 1px; }
      .close { margin-left: auto; width: 25px; }
    `;
  }
  html() {
    return `
      <div class="label">${icon('table')}<slot></slot></div>
      <svg class="edge" width="14" height="23" viewBox="0 0 14 23"><path fill="#fff" d="M0 0q2 1 5 9 4 12 8 14H0z"/><path fill="none" stroke="#8f98a3" d="M0 .5q2 1 5 9 4 12 8 13h1"/></svg>
      <button class="close" aria-label="Close Accounts Master"><svg width="8" height="8" viewBox="0 0 8 8"><path stroke="#333" stroke-width="1.500" d="M.5.500l7 7M7.500.500l-7 7"/></svg></button>
    `;
  }
}

const ACCOUNTS = [
  [1, '111', 'Cash'],
  [2, '222', 'Receivables'],
  [3, '333', 'Property and Equipment'],
  [4, '444', 'Payables'],
  [5, '555', 'Long-Term Debt'],
  [6, '666', 'Equity']
];

class DataSheet extends Part {
  css() {
    return `
      :host { display: block; position: relative; overflow: hidden; background: #fff; font-size: 13px; color: #3a3a3a; }
      table { width: 100%; table-layout: fixed; border-spacing: 0; }
      td, th { height: 20px; padding: 0 3px; line-height: 19px; border-right: 1px solid #f5f5f7; border-bottom: 1px solid #f5f5f7; font-weight: normal; white-space: nowrap; }
      td { padding-top: 2px; line-height: 17px; }
      thead th { padding-right: 6px; background: #dde2e6; border-right-color: #b0b8c0; border-bottom-color: #dde2e6; }
      thead th:nth-child(n+5) { border-right-color: #e6eaee; }
      thead th:nth-child(n+6) { background: #f5f7fc; border-bottom-color: #f5f7fc; border-right-color: #ebedf2; }
      thead th:nth-child(2) { background: #a6a6a6; }
      thead div { display: flex; align-items: center; }
      thead span { flex: 1; text-align: center; }
      thead th:nth-child(3) span, thead th:nth-child(5) span { text-align: left; }
      thead th:nth-child(5) { font-style: italic; }
      tbody td:first-child { background: #f5f7fc; }
      .data td:nth-child(-n+5) { border-color: #e1e1e1; }
      .data td:first-child { background: #fddb62; border-bottom-color: #a9a9a0; text-align: center; color: #000; }
      .data td:nth-child(2) { padding-right: 2px; background: #a3cdef; border-bottom-color: #d4e6f5; text-align: right; }
      .even td:nth-child(n+3):nth-child(-n+5) { background: #f0f0f0; }
      .even td:nth-child(2) { background: #9ac4e8; }
      .data td:first-child svg { margin: 0 auto; }
      .picked { position: absolute; left: 18px; top: 0; width: 48px; height: 161px; border: 3px solid #f6a5aa; border-top-width: 1px; }
      .pointer { position: absolute; left: 100px; top: 196px; }
    `;
  }
  html() {
    const head = t => `<th><div><span>${t}</span>${CARET}</div></th>`;
    const cells = list => list.map(t => `<td>${t}</td>`).join('');
    const star = '<svg width="9" height="9" viewBox="0 0 9 9"><path stroke="#000" d="M4.500 0v9M0 4.500h9M1.500 1.500l6 6M7.500 1.500l-6 6"/></svg>';
    const blank = `<tr>${'<td></td>'.repeat(7)}</tr>`;
    return `
      <table>
        <colgroup><col width="19"><col width="46"><col width="131"><col width="161"><col width="99"><col width="96"><col></colgroup>
        <thead><tr>
          <th><svg width="12" height="12" viewBox="0 0 12 12"><path fill="#f2f4f6" stroke="#c4cad0" d="M11.500 1v10.500H1z"/></svg></th>
          ${head('ID')}${head('Account_Number')}${head('Account_Type')}${head('Click to Add')}<th></th><th></th>
        </tr></thead>
        <tbody>
          ${ACCOUNTS.map((a, i) => `<tr class="data ${i % 2 ? 'even' : ''}">${cells(['', ...a, '', '', ''])}</tr>`).join('')}
          <tr class="data">${cells([star, '(New)', '', '', '', '', ''])}</tr>
          ${blank.repeat(20)}
        </tbody>
      </table>
      <div class="picked"></div>
      <svg class="pointer" width="13" height="20" viewBox="0 0 13 20"><path fill="#fff" stroke="#000" d="M1.500 1v15.500l3.500-3.300 2.500 5.300 2.300-1-2.500-5.300h4.500z"/></svg>
    `;
  }
}

class RecordBar extends Part {
  css() {
    return `
      :host { display: flex; align-items: center; height: 19px; padding-left: 5px; background: linear-gradient(#f3f4f7 50%, #e4e6eb 50%); border-top: 1px solid #a7adb8; box-sizing: border-box; color: #444; white-space: nowrap; }
      button { height: 18px; width: 18px; color: #333; }
      .off { opacity: .35; }
      input { height: 16px; padding: 0 1px; background: #fff; border: 1px solid #c0c0c0; color: #000; }
      #record { width: 51px; }
      #search { width: 71px; margin-left: 5px; }
      .filter { width: 80px; gap: 3px; margin-left: 2px; border: solid #a7adb8; border-width: 0 1px; color: #8d8d8d; }
    `;
  }
  html() {
    const button = (label, d, w = 8, extra = '') =>
      `<button aria-label="${label}" class="${label === 'Previous' ? 'off' : ''}"><svg width="${w}" height="8" viewBox="0 0 ${w} 8"><path fill="currentColor" d="${d}"/>${extra}</svg></button>`;
    return `
      <label for="record">Record:</label>
      ${button('First', 'M1 0h1v8H1zM7 0v8L3 4z')}
      ${button('Previous', 'M5 0v8L1 4z')}
      <input id="record" value="1 of 6">
      ${button('Next', 'M1 0v8l4-4z')}
      ${button('Last', 'M0 0v8l4-4zM5 0h1v8H5z')}
      ${button('New record', 'M0 0v8l4-4z', 13, '<path stroke="#e8ad2c" stroke-width="1.500" d="M9 0v8M5 4h8M6 1l6 6M12 1L6 7"/>')}
      <button class="filter">${icon('noFilter')}No Filter</button>
      <input id="search" aria-label="Search records" value="Search">
    `;
  }
}

class ExcelBody extends Part {
  css() {
    return `
      :host { display: grid; grid-template-rows: 46px minmax(0, 1fr) 27px; min-height: 0; border-bottom: 1px solid #c0c0c0; background: #e6e6e6; }
      .sheet { display: grid; grid-template-columns: minmax(0, 1fr) 21px; min-height: 0; }
    `;
  }
  html() {
    return `
      <formula-bar></formula-bar>
      <div class="sheet"><cell-grid></cell-grid><scroll-bar></scroll-bar></div>
      <sheet-tabs></sheet-tabs>
    `;
  }
}

class FormulaBar extends Part {
  css() {
    return `
      :host { display: flex; padding: 10px 5px 9px; background: #e6e6e6; box-sizing: border-box; }
      .box { display: flex; align-items: center; background: #fff; border: 1px solid #c6c6c6; }
      .name { width: 148px; padding-right: 6px; }
      input { flex: 1; min-width: 0; padding-left: 6px; font-size: 12px; color: #333; }
      .dots { width: 30px; display: grid; place-items: center; }
      .tools { width: 110px; justify-content: space-evenly; }
      .tools button { width: 36px; height: 24px; }
      .formula { flex: 1; margin-left: 3px; padding-right: 3px; }
      i { font: italic bold 15px "Liberation Serif", serif; color: #555; }
      i small { font-size: 12px; }
    `;
  }
  html() {
    return `
      <div class="box name"><input aria-label="Name Box" value="B15"><svg width="7" height="4" viewBox="0 0 7 4"><path fill="#666" d="M0 0h7L3.500 4z"/></svg></div>
      <div class="dots"><svg width="2" height="10" viewBox="0 0 2 10"><path fill="#a0a0a0" d="M0 0h2v2H0zM0 4h2v2H0zM0 8h2v2H0z"/></svg></div>
      <div class="box tools">
        <button aria-label="Cancel"><svg width="10" height="10" viewBox="0 0 10 10"><path stroke="#c0c0c0" stroke-width="2" d="M.5.500l9 9M9.500.500l-9 9"/></svg></button>
        <button aria-label="Enter"><svg width="13" height="10" viewBox="0 0 13 10"><path fill="none" stroke="#c0c0c0" stroke-width="2.500" d="M1 5l4 3.500L12 1"/></svg></button>
        <button aria-label="Insert Function"><i>f<small>x</small></i></button>
      </div>
      <div class="box formula"><input aria-label="Formula"><svg width="9" height="6" viewBox="0 0 9 6"><path fill="none" stroke="#666" stroke-width="2" d="M1 1l3.500 3.500L8 1"/></svg></div>
    `;
  }
}

class CellGrid extends Part {
  css() {
    return `
      :host { display: block; overflow: hidden; background: #fff; border: solid #9a9a9a; border-width: 0 1px 1px 0; font-size: 13px; color: #111; }
      table { width: 100%; table-layout: fixed; border-spacing: 0; }
      td, th { height: 20px; padding: 0 2px; line-height: 19px; border-right: 1px solid #d4d4d4; border-bottom: 1px solid #d4d4d4; white-space: nowrap; }
      th { font-weight: normal; color: #333; background: #e6e6e6; border-color: #b0b0b0; font-size: 12px; padding: 0; }
      tbody td, tbody th { padding-top: 2px; line-height: 17px; }
      thead th { border-bottom-color: #999; }
      thead th:first-child svg { margin: 3px 3px 0 auto; }
      tbody th { border-right-color: #999; }
      td:nth-child(2) { text-align: right; }
      .top td:nth-child(-n+4), .data td:nth-child(-n+4) { border-bottom-color: #a9d08e; }
      .top td:nth-child(-n+4) { padding: 0 0 0 2px; background: #70ad47; border-right-color: #70ad47; color: #fff; font-weight: bold; }
      .band td:nth-child(-n+4) { background: #e2efda; border-right-color: #e2efda; }
      .data td:nth-child(4) { border-right-color: #a9d08e; }
      .top div { display: flex; align-items: center; justify-content: space-between; height: 19px; }
      .top button { width: 16px; height: 16px; flex: none; background: linear-gradient(#fff, #f0f1f4); border: 1px solid #b8bcc6; color: #555; }
      .corner { display: flex; justify-content: space-between; align-items: flex-end; height: 17px; }
      .corner svg { margin-right: -3px; }
    `;
  }
  html() {
    const names = ['A', 'B', 'C', 'D', 'E', 'F', 'G', 'H', 'I', ''];
    const rest = '<td></td>'.repeat(7);
    const filter = t => `<td><div>${t}<button aria-label="Filter ${t}"><svg width="7" height="4" viewBox="0 0 7 4"><path fill="currentColor" d="M0 0h7L3.500 4z"/></svg></button></div></td>`;
    const handle = '<svg width="4" height="4" viewBox="0 0 4 4"><path fill="#3f6fb0" d="M2 0h2v4H0V2h2z"/></svg>';
    const last = ACCOUNTS.length - 1;
    const rows = ACCOUNTS.map(([id, num, type], i) => `
      <tr class="data ${i % 2 ? '' : 'band'}"><th>${i + 2}</th><td>${id}</td><td>${num}</td>
      <td>${i === last ? `<div class="corner">${type}${handle}</div>` : type}</td>${rest}</tr>`);
    for (let n = 8; n <= 23; n++) rows.push(`<tr><th>${n}</th><td></td><td></td><td></td>${rest}</tr>`);
    return `
      <table>
        <colgroup><col width="26"><col width="36"><col width="132"><col width="161">${'<col width="64">'.repeat(6)}<col></colgroup>
        <thead><tr><th><svg width="12" height="12" viewBox="0 0 12 12"><path fill="#b4b9b7" d="M12 0v12H0z"/></svg></th>${names.map(n => `<th>${n}</th>`).join('')}</tr></thead>
        <tbody>
          <tr class="top"><th>1</th>${filter('ID')}${filter('Account_Number')}${filter('Account_Type')}${rest}</tr>
          ${rows.join('')}
        </tbody>
      </table>
    `;
  }
}

class ScrollBar extends Part {
  css() {
    return `
      :host { display: flex; flex-direction: column; width: 15px; margin: 2px auto 0 3px; background: #dadada; }
      :host([across]) { flex-direction: row; width: 274px; height: 15px; margin: 0; }
      button { width: 15px; height: 15px; flex: none; background: #fff; border: 1px solid #ababab; }
      .thumb { flex: 422; background: #fff; border: 1px solid #ababab; }
      .track { flex: 21; }
      :host([across]) .thumb { flex: 214; }
      :host([across]) .track { flex: 30; }
    `;
  }
  html() {
    const across = this.hasAttribute('across');
    const arrow = d => `<svg width="7" height="7" viewBox="0 0 7 7"><path fill="#555" d="${d}"/></svg>`;
    return `
      <button aria-label="Scroll back">${arrow(across ? 'M5 0v7L1 3.500z' : 'M0 5h7L3.500 1z')}</button>
      <div class="thumb"></div><div class="track"></div>
      <button aria-label="Scroll forward">${arrow(across ? 'M2 0v7l4-3.500z' : 'M0 2h7L3.500 6z')}</button>
    `;
  }
}

class SheetTabs extends Part {
  css() {
    return `
      :host { display: flex; align-items: flex-start; padding: 0 18px 0 15px; box-sizing: border-box; font-size: 12px; }
      .move { width: 28px; height: 26px; }
      .tab { height: 25px; margin-top: -1px; padding: 1px 12px 0; }
      .on { margin-left: 29px; background: #fff; border: solid #9a9a9a; border-width: 0 1px; box-shadow: inset 0 -2px #217346; color: #217346; font-weight: bold; padding: 1px 11px 0; }
      .rule { width: 1px; height: 20px; margin-top: 3px; background: #9a9a9a; }
      .add { margin: 5px auto 0 33px; }
      .dots { margin: 9px 15px 0 0; }
      scroll-bar { margin-top: 6px; }
    `;
  }
  html() {
    const move = (label, d) => `<button class="move" aria-label="${label}"><svg width="5" height="8" viewBox="0 0 5 8"><path fill="#c0c0c0" d="${d}"/></svg></button>`;
    return `
      ${move('Previous sheet', 'M5 0v8L0 4z')}${move('Next sheet', 'M0 0v8l5-4z')}
      <button class="tab on">Sheet2</button><button class="tab">Sheet1</button><span class="rule"></span>
      <button class="add" aria-label="New sheet"><svg width="17" height="17" viewBox="0 0 17 17"><circle cx="8.500" cy="8.500" r="7.500" fill="none" stroke="#777"/><path stroke="#666" stroke-width="1.500" d="M4.500 8.500h8M8.500 4.500v8"/></svg></button>
      <svg class="dots" width="2" height="10" viewBox="0 0 2 10"><path fill="#a0a0a0" d="M0 0h2v2H0zM0 4h2v2H0zM0 8h2v2H0z"/></svg>
      <scroll-bar across></scroll-bar>
    `;
  }
}

class StatusBar extends Part {
  css() {
    return `
      :host { display: flex; align-items: center; padding-left: 7px; background: #f1f1f1; box-sizing: border-box; color: #555; }
      .text { flex: 1; }
      .lock { margin-right: 19px; }
      .view { width: 38px; height: 21px; }
      .view.on { background: #c8c8c8; }
      .end { width: 12px; }
      .step { width: 16px; height: 21px; }
      input { width: 99px; height: 21px; appearance: none; }
      input::-webkit-slider-runnable-track { height: 1px; background: #a6a6a6; }
      input::-webkit-slider-thumb { appearance: none; width: 4px; height: 11px; margin-top: -5px; background: #666; }
      output { width: 58px; padding-left: 12px; box-sizing: border-box; }
    `;
  }
  html() {
    const zoom = this.attr('zoom');
    return `
      <span class="text">${this.attr('text')}</span>
      ${this.attr('lock') ? `<span class="lock">${this.attr('lock')}</span>` : ''}
      ${this.list('views').map((v, i) => `<button class="view ${i ? '' : 'on'}" aria-label="${v}">${icon(v)}</button>`).join('')}
      ${zoom ? `
        <button class="step" aria-label="Zoom Out"><svg width="7" height="8" viewBox="0 0 7 8"><path fill="#555" d="M0 3h7v2H0z"/></svg></button>
        <input type="range" min="0" max="100" value="50" aria-label="Zoom">
        <button class="step" aria-label="Zoom In"><svg width="8" height="8" viewBox="0 0 8 8"><path fill="#555" d="M0 3h3V0h2v3h3v2H5v3H3V5H0z"/></svg></button>
        <output>${zoom}</output>` : '<span class="end"></span>'}
    `;
  }
}

customElements.define('office-window', OfficeWindow);
customElements.define('title-bar', TitleBar);
customElements.define('document-name', DocumentName);
customElements.define('tab-strip', TabStrip);
customElements.define('ribbon-bar', RibbonBar);
customElements.define('ribbon-group', RibbonGroup);
customElements.define('tool-button', ToolButton);
customElements.define('big-button', BigButton);
customElements.define('tool-rule', ToolRule);
customElements.define('combo-box', ComboBox);
customElements.define('access-body', AccessBody);
customElements.define('nav-pane', NavPane);
customElements.define('document-tab', DocumentTab);
customElements.define('data-sheet', DataSheet);
customElements.define('record-bar', RecordBar);
customElements.define('excel-body', ExcelBody);
customElements.define('formula-bar', FormulaBar);
customElements.define('cell-grid', CellGrid);
customElements.define('scroll-bar', ScrollBar);
customElements.define('sheet-tabs', SheetTabs);
customElements.define('status-bar', StatusBar);
</script>
</body>
</html>
